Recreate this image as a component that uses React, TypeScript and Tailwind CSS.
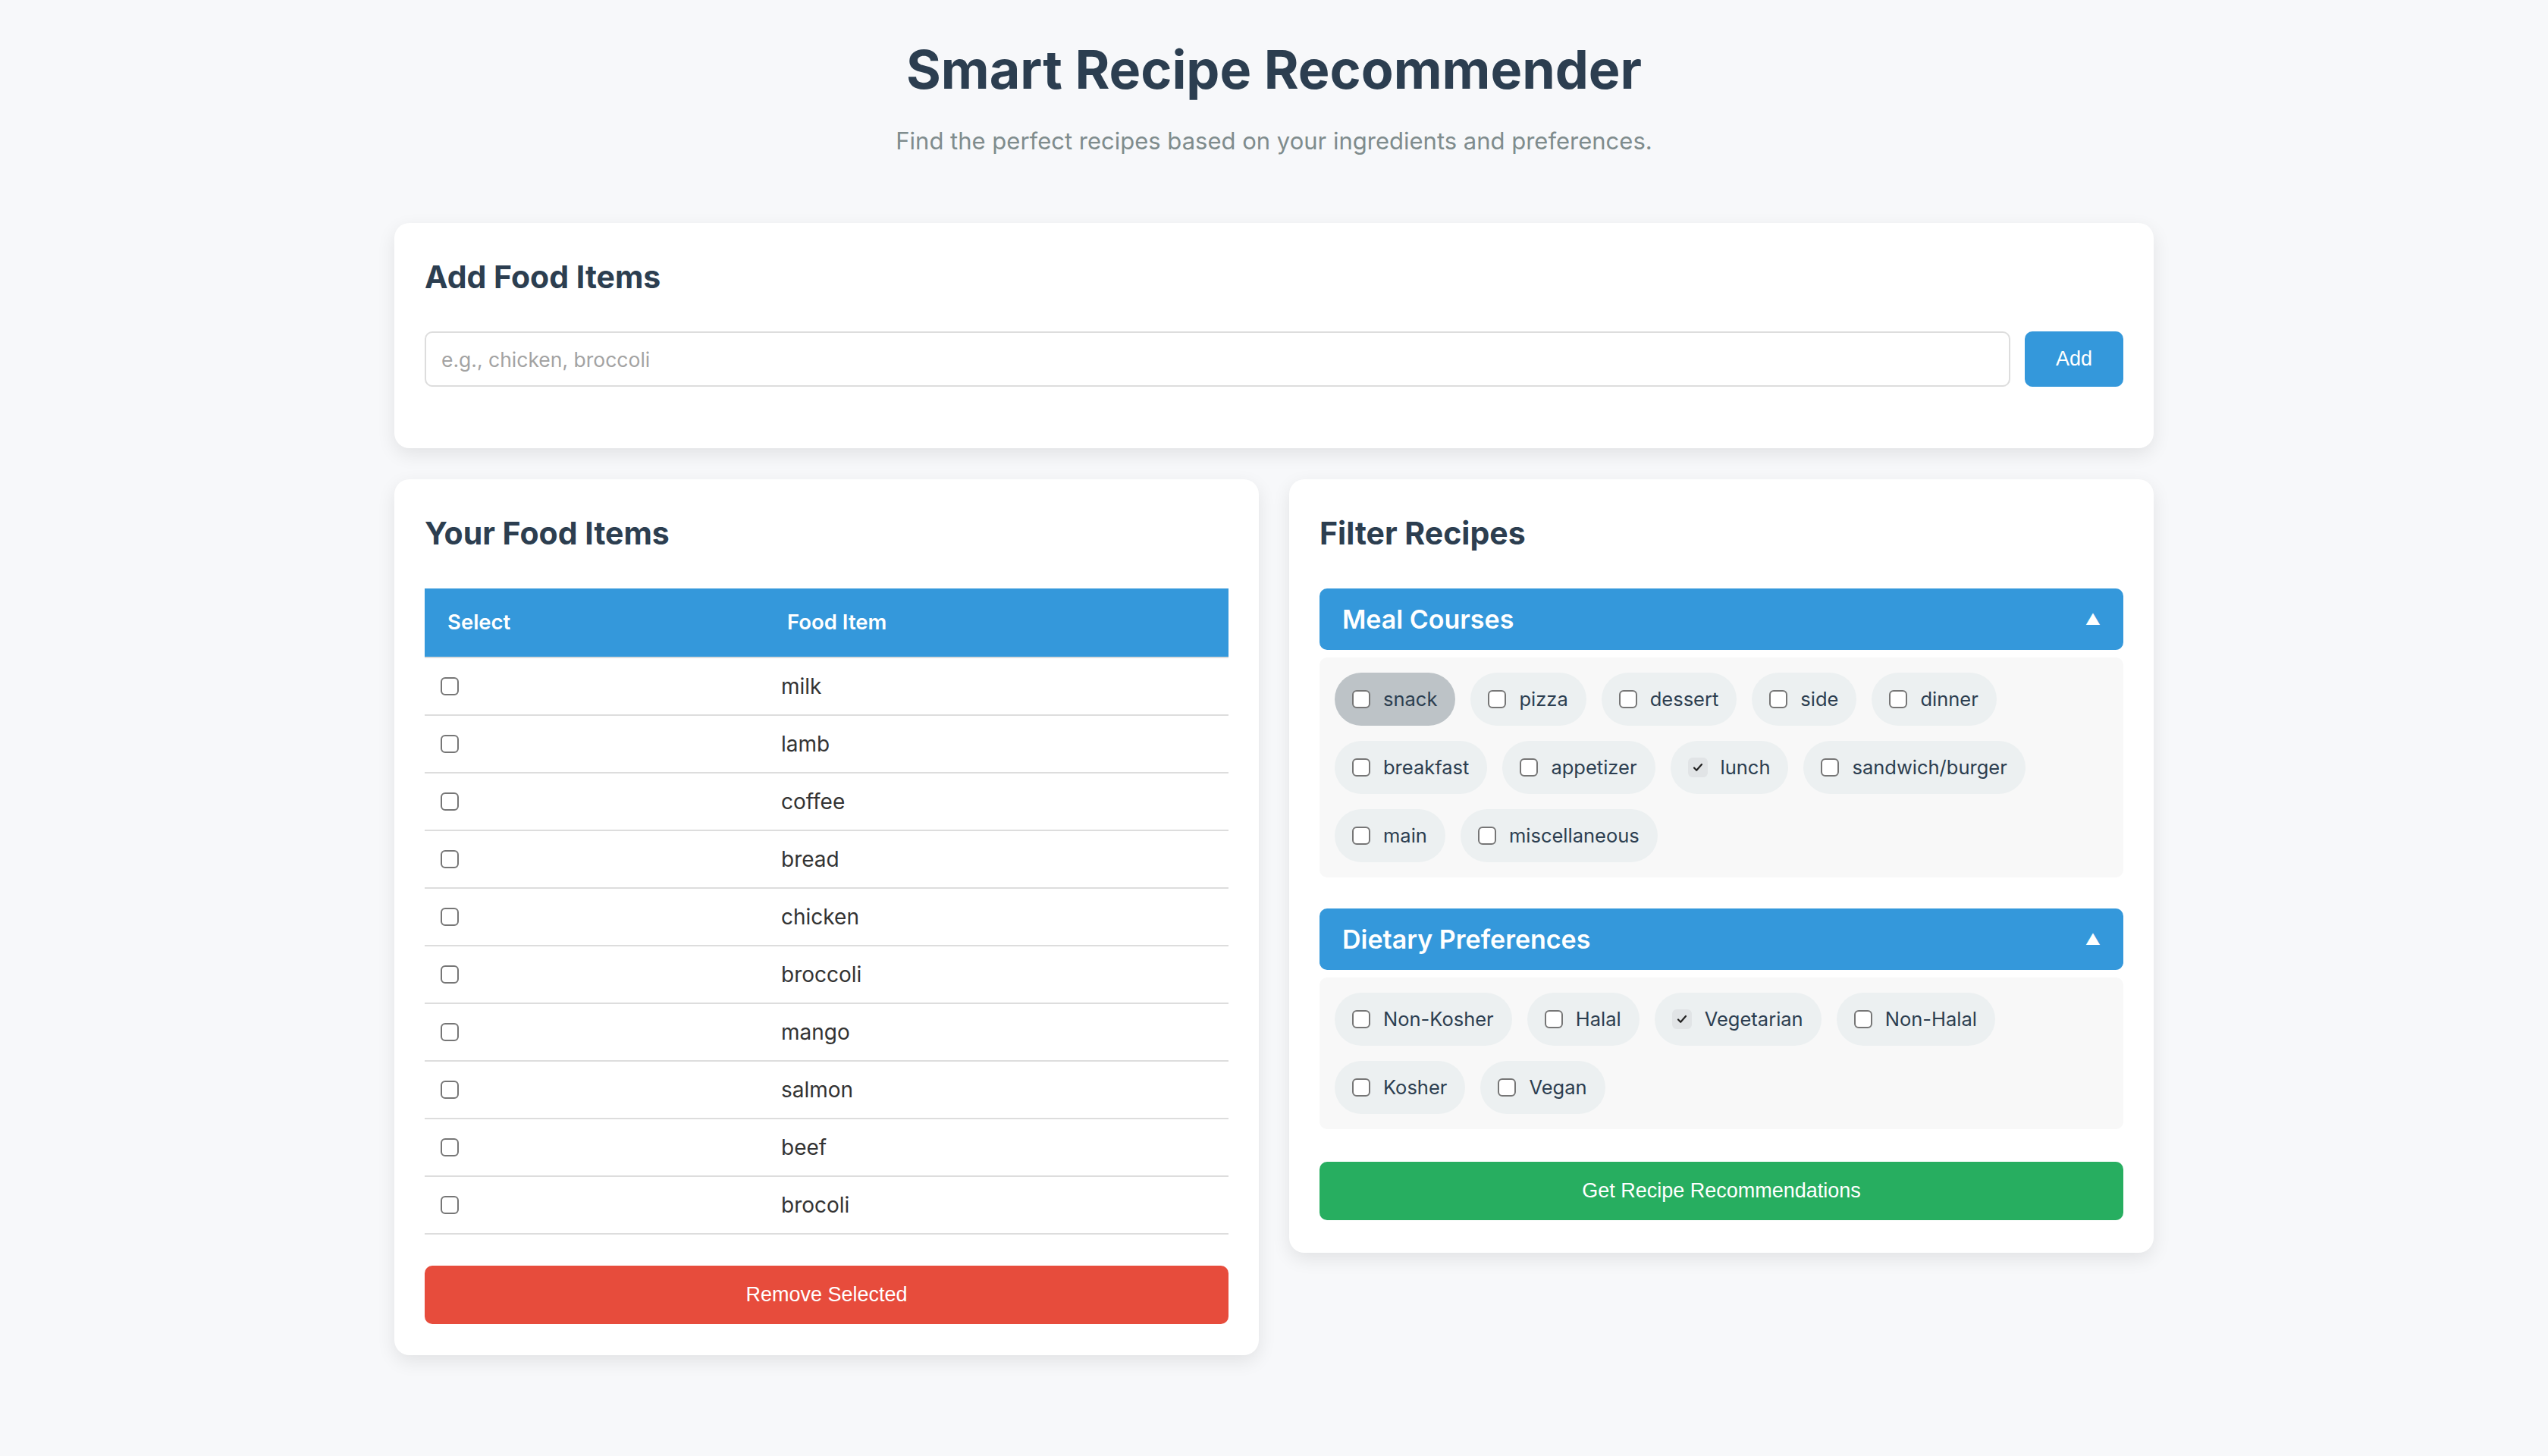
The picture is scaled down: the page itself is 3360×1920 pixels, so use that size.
import { useState } from "react";

const foods = ["milk", "lamb", "coffee", "bread", "chicken", "broccoli", "mango", "salmon", "beef", "brocoli"];

const courses = [
  "snack",
  "pizza",
  "dessert",
  "side",
  "dinner",
  "breakfast",
  "appetizer",
  "lunch",
  "sandwich/burger",
  "main",
  "miscellaneous",
];

const diets = ["Non-Kosher", "Halal", "Vegetarian", "Non-Halal", "Kosher", "Vegan"];

function Box({ checked }: { checked?: boolean }) {
  if (checked) {
    return (
      <span className="flex h-[26px] w-[26px] shrink-0 items-center justify-center rounded-[6px] bg-[#e1e4e6]">
        <svg width="16" height="16" viewBox="0 0 16 16" fill="none">
          <path d="M3 8.5l3.2 3.3L13 4" stroke="#222" strokeWidth="2.2" strokeLinecap="round" strokeLinejoin="round" />
        </svg>
      </span>
    );
  }
  return <span className="block h-[24px] w-[24px] shrink-0 rounded-[6px] border-2 border-[#767676] bg-white" />;
}

function Chip({ label, checked, hover }: { label: string; checked?: boolean; hover?: boolean }) {
  return (
    <label
      className={
        "flex h-[70px] items-center gap-[17px] rounded-full pl-[23px] pr-[24px] text-[25.5px] text-[#2c3e50] " +
        (hover ? "bg-[#bdc3c7]" : "bg-[#ecf0f1]")
      }
    >
      <Box checked={checked} />
      {label}
    </label>
  );
}

function Section({ title, children }: { title: string; children: React.ReactNode }) {
  return (
    <div>
      <div className="flex h-[81px] items-center justify-between rounded-[10px] bg-[#3498db] px-[30px] text-white">
        <span className="text-[34px] font-semibold">{title}</span>
        <span className="text-[20px]">▲</span>
      </div>
      <div className="mt-[10px] flex flex-wrap gap-[20px] rounded-[10px] bg-[#f8f8f8] p-[20px]">{children}</div>
    </div>
  );
}

export default function App() {
  const [checked] = useState<string[]>(["lunch", "Vegetarian"]);

  return (
    <div className="min-h-screen bg-[#f7f8fa] pt-[50px] font-['Inter',sans-serif]">
      <div className="mx-auto w-[2320px]">
        <h1 className="text-center text-[70px] font-bold leading-[84px] text-[#2c3e50]">Smart Recipe Recommender</h1>
        <p className="mt-[27px] text-center text-[31px] leading-[50px] text-[#7f8c8d]">
          Find the perfect recipes based on your ingredients and preferences.
        </p>

        <div className="mt-[83px] rounded-[20px] bg-white px-[40px] pb-[81px] pt-[40px] shadow-[0_8px_24px_rgba(0,0,0,0.09)]">
          <h2 className="mt-[8px] text-[41px] font-bold leading-[46px] text-[#2c3e50]">Add Food Items</h2>
          <div className="mt-[49px] flex gap-[19px]">
            <input
              placeholder="e.g., chicken, broccoli"
              className="h-[73px] flex-1 rounded-[10px] border-2 border-[#dddddd] px-[20px] text-[26.5px] outline-none placeholder:text-[#a3a3a3]"
            />
            <button className="h-[73px] w-[130px] rounded-[10px] bg-[#3498db] font-['Liberation_Sans',Arial,sans-serif] text-[27px] text-white">
              Add
            </button>
          </div>
        </div>

        <div className="mt-[41px] flex items-start gap-[40px]">
          <div className="flex-1 rounded-[20px] bg-white px-[40px] pb-[41px] pt-[40px] shadow-[0_8px_24px_rgba(0,0,0,0.09)]">
            <h2 className="mt-[8px] text-[41px] font-bold leading-[46px] text-[#2c3e50]">Your Food Items</h2>
            <div className="mt-[50px]">
              <div className="flex h-[92px] items-center border-b-2 border-[#dddddd] bg-[#3498db] text-[27.5px] font-semibold text-white">
                <span className="w-[450px] pl-[30px]">Select</span>
                <span className="pl-[28px]">Food Item</span>
              </div>
              {foods.map((f) => (
                <div key={f} className="flex h-[76px] items-center border-b-2 border-[#dddddd] text-[28px] text-[#333333]">
                  <span className="w-[470px] pl-[21px]">
                    <Box />
                  </span>
                  <span>{f}</span>
                </div>
              ))}
            </div>
            <button className="mt-[41px] h-[77px] w-full rounded-[10px] bg-[#e74c3c] font-['Liberation_Sans',Arial,sans-serif] text-[27px] text-white">
              Remove Selected
            </button>
          </div>

          <div className="flex-1 rounded-[20px] bg-white px-[40px] pb-[43px] pt-[40px] shadow-[0_8px_24px_rgba(0,0,0,0.09)]">
            <h2 className="mt-[8px] text-[41px] font-bold leading-[46px] text-[#2c3e50]">Filter Recipes</h2>
            <div className="mt-[50px] flex flex-col gap-[41px]">
              <Section title="Meal Courses">
                {courses.map((c) => (
                  <Chip key={c} label={c} checked={checked.includes(c)} hover={c === "snack"} />
                ))}
              </Section>
              <Section title="Dietary Preferences">
                {diets.map((d) => (
                  <Chip key={d} label={d} checked={checked.includes(d)} />
                ))}
              </Section>
            </div>
            <button className="mt-[43px] h-[77px] w-full rounded-[10px] bg-[#27ae60] font-['Liberation_Sans',Arial,sans-serif] text-[27px] text-white">
              Get Recipe Recommendations
            </button>
          </div>
        </div>
      </div>
    </div>
  );
}
